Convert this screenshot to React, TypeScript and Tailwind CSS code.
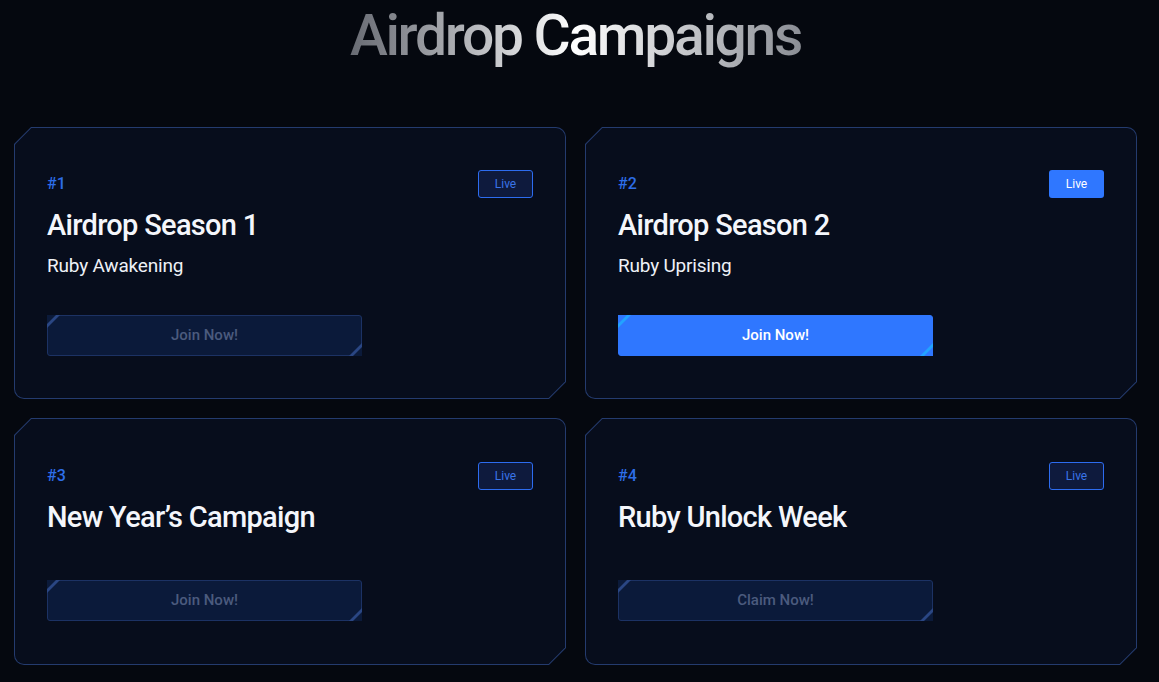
import React from 'react';

type Campaign = {
  id: number;
  title: string;
  subtitle?: string;
  cta: string;
  active?: boolean;
};

const campaigns: Campaign[] = [
  { id: 1, title: 'Airdrop Season 1', subtitle: 'Ruby Awakening', cta: 'Join Now!' },
  { id: 2, title: 'Airdrop Season 2', subtitle: 'Ruby Uprising', cta: 'Join Now!', active: true },
  { id: 3, title: 'New Year’s Campaign', cta: 'Join Now!' },
  { id: 4, title: 'Ruby Unlock Week', cta: 'Claim Now!' },
];

function LiveBadge({ active }: { active?: boolean }) {
  return active ? (
    <span className="flex h-[28px] w-[55px] items-center justify-center rounded-[3px] bg-[#2f77ff] text-[12px] text-white">
      Live
    </span>
  ) : (
    <span className="flex h-[28px] w-[55px] items-center justify-center rounded-[3px] border border-[#2d6cf0] bg-[#0e1a3d] text-[12px] text-[#3a74e8]">
      Live
    </span>
  );
}

function CtaButton({ label, active }: { label: string; active?: boolean }) {
  return (
    <button
      className={
        active
          ? 'relative flex h-[41px] w-[315px] items-center justify-center rounded-[3px] border border-[#2f77ff] bg-[#2f77ff] text-[15px] font-medium text-white'
          : 'relative flex h-[41px] w-[315px] items-center justify-center rounded-[3px] border border-[#1c3264] bg-[#0b1a3a] text-[15px] font-medium text-[#4b5b7e]'
      }
    >
      {/* corner accents */}
      <span
        className={
          active
            ? 'absolute -left-px -top-px h-[13px] w-[13px] bg-[#22a3ff] [clip-path:polygon(0_0,100%_0,0_100%)]'
            : 'absolute -left-px -top-px h-[13px] w-[13px] bg-[#2a4683] [clip-path:polygon(0_0,100%_0,0_100%)]'
        }
      />
      <span
        className={
          active
            ? 'absolute -left-px -top-px h-[9px] w-[9px] bg-[#2f77ff] [clip-path:polygon(0_0,100%_0,0_100%)]'
            : 'absolute -left-px -top-px h-[9px] w-[9px] bg-[#0b1a3a] [clip-path:polygon(0_0,100%_0,0_100%)]'
        }
      />
      <span
        className={
          active
            ? 'absolute -bottom-px -right-px h-[13px] w-[13px] bg-[#22a3ff] [clip-path:polygon(100%_0,100%_100%,0_100%)]'
            : 'absolute -bottom-px -right-px h-[13px] w-[13px] bg-[#2a4683] [clip-path:polygon(100%_0,100%_100%,0_100%)]'
        }
      />
      <span
        className={
          active
            ? 'absolute -bottom-px -right-px h-[9px] w-[9px] bg-[#2f77ff] [clip-path:polygon(100%_0,100%_100%,0_100%)]'
            : 'absolute -bottom-px -right-px h-[9px] w-[9px] bg-[#0b1a3a] [clip-path:polygon(100%_0,100%_100%,0_100%)]'
        }
      />
      <span className="relative">{label}</span>
    </button>
  );
}

function CampaignCard({ c, tall }: { c: Campaign; tall: boolean }) {
  return (
    <div
      className={
        (tall ? 'h-[272px] ' : 'h-[247px] ') +
        'rounded-tr-[10px] rounded-bl-[10px] bg-[#243b6e] p-px [clip-path:polygon(17px_0,100%_0,100%_calc(100%_-_17px),calc(100%_-_17px)_100%,0_100%,0_17px)]'
      }
    >
      <div
        className={
          (tall ? 'pb-[42px] pt-[42px] ' : 'pb-[43px] pt-[43px] ') +
          'flex h-full flex-col rounded-tr-[9px] rounded-bl-[9px] bg-[#070d1c] px-[32px] [clip-path:polygon(16.4px_0,100%_0,100%_calc(100%_-_16.4px),calc(100%_-_16.4px)_100%,0_100%,0_16.4px)]'
        }
      >
        <div className="flex h-[28px] items-center justify-between">
          <span className="text-[16px] font-medium text-[#2d6ee8]">#{c.id}</span>
          <LiveBadge active={c.active} />
        </div>
        <h3 className="mt-[9px] text-[29px] font-medium leading-[36px] tracking-[-0.7px] text-[#f4f6fb]">
          {c.title}
        </h3>
        {c.subtitle && (
          <p className="mt-[9px] text-[19px] leading-[28px] tracking-[-0.2px] text-[#eef1f7]">{c.subtitle}</p>
        )}
        <div className="mt-auto">
          <CtaButton label={c.cta} active={c.active} />
        </div>
      </div>
    </div>
  );
}

export default function App() {
  return (
    <div className="min-h-[682px] w-full bg-[#05080f] font-['Roboto',sans-serif]">
      <div className="ml-[14px] w-[1123px]">
        <h1 className="pt-[7px] text-center text-[57px] font-medium leading-none tracking-[-2.3px]">
          <span className="bg-gradient-to-r from-[#686b73] via-[#ffffff] to-[#8b8e95] bg-clip-text text-transparent">
            Airdrop Campaigns
          </span>
        </h1>

        <div className="mt-[63px] grid grid-cols-2 gap-x-[19px] gap-y-[19px]">
          {campaigns.map((c, idx) => (
            <CampaignCard key={c.id} c={c} tall={idx < 2} />
          ))}
        </div>
      </div>
    </div>
  );
}
